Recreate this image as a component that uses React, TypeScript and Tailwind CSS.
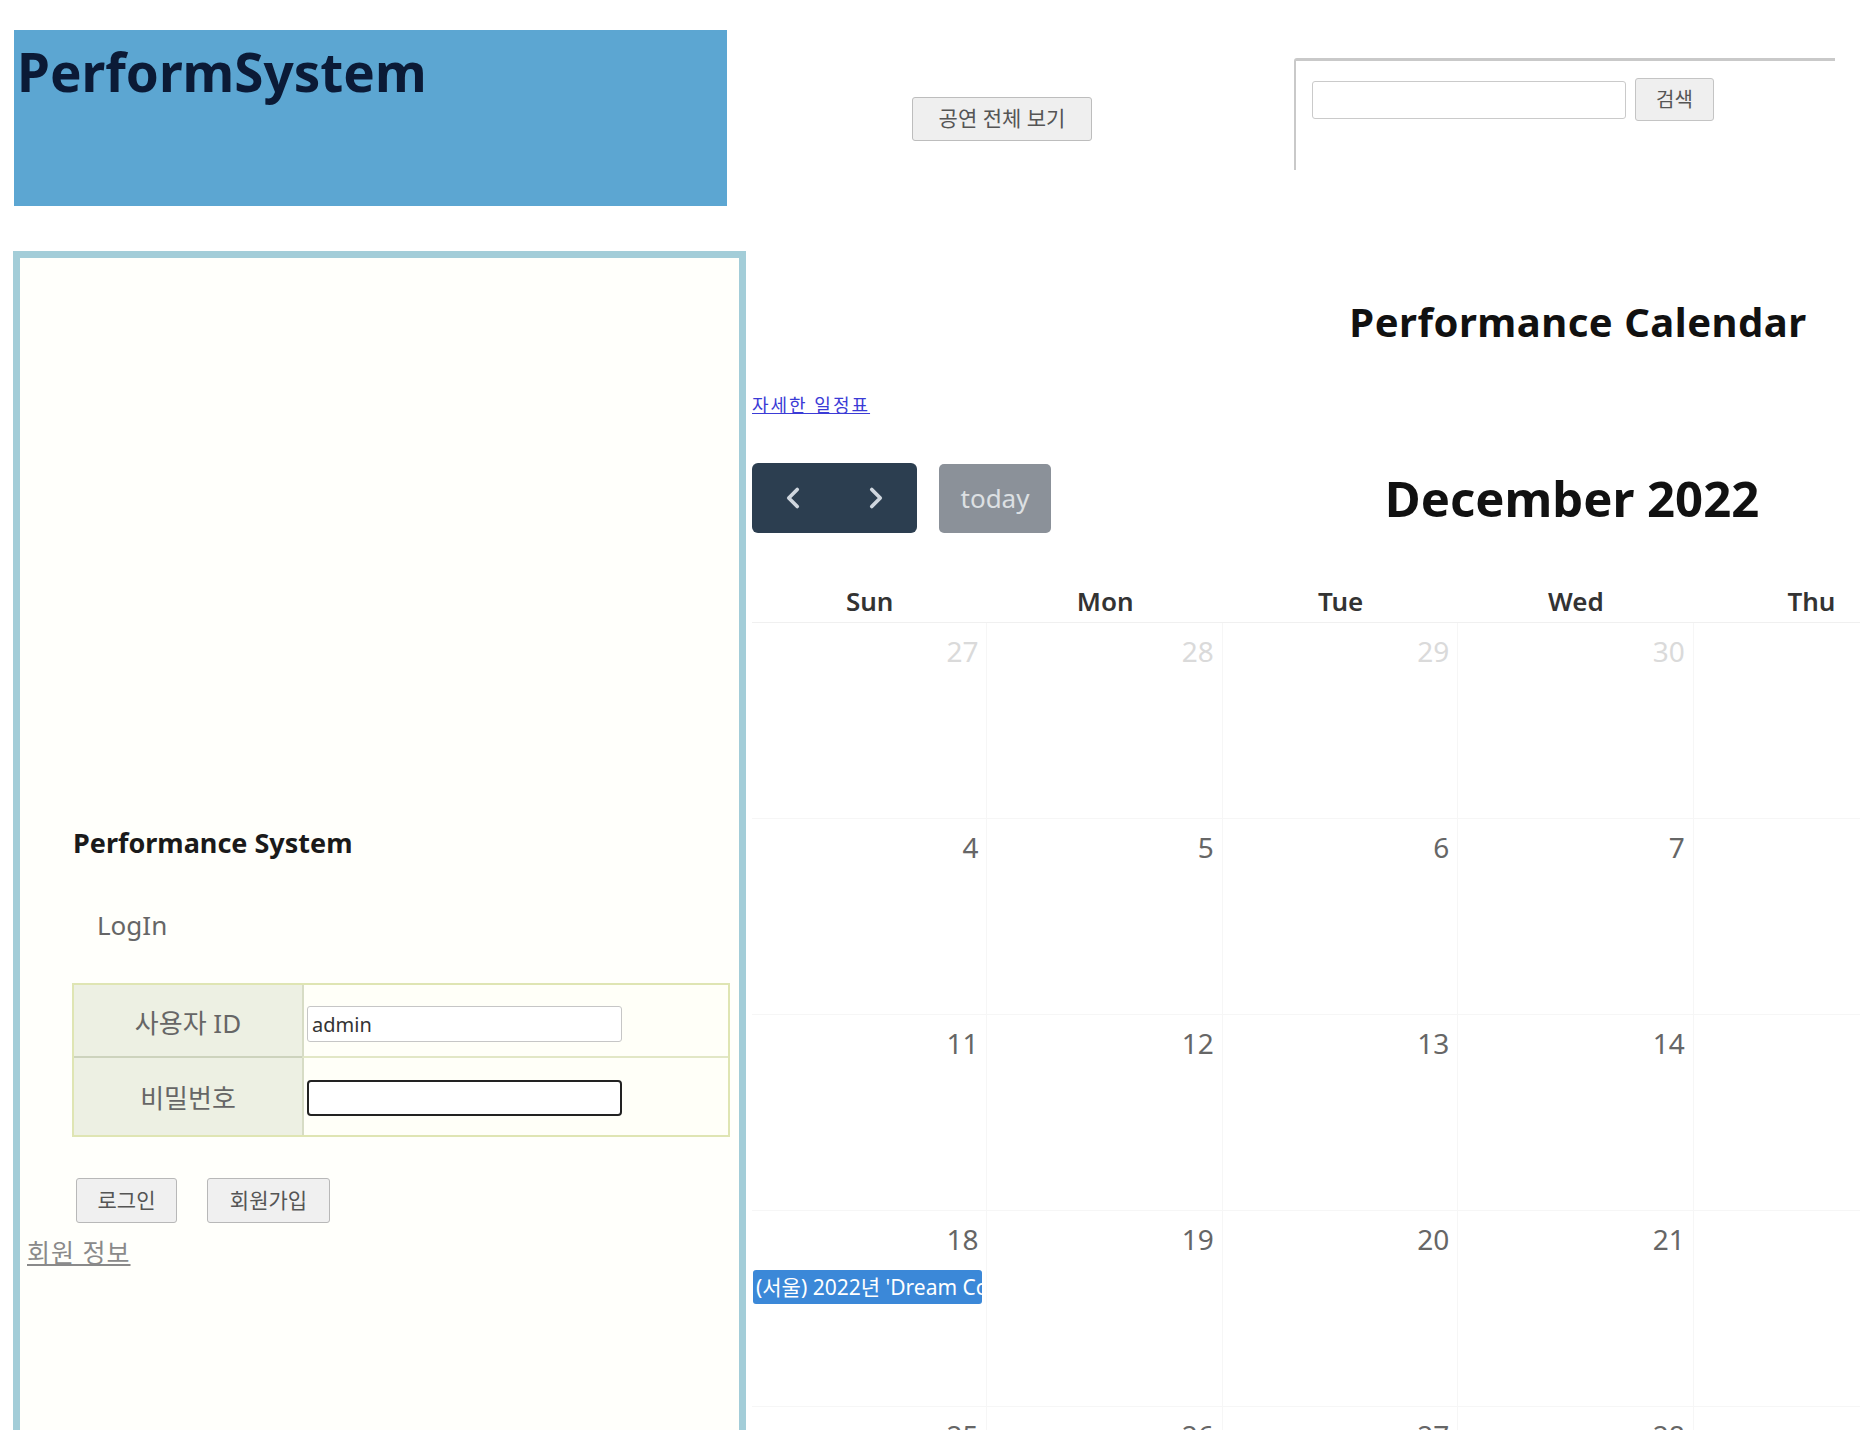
import React from "react";
import { ChevronLeft, ChevronRight } from "lucide-react";

type Day = { n: number; other?: boolean; events?: string[] };

const weeks: Day[][] = [
  [
    { n: 27, other: true },
    { n: 28, other: true },
    { n: 29, other: true },
    { n: 30, other: true },
    { n: 1 },
    { n: 2 },
    { n: 3 },
  ],
  [4, 5, 6, 7, 8, 9, 10].map((n) => ({ n })),
  [11, 12, 13, 14, 15, 16, 17].map((n) => ({ n })),
  [
    { n: 18, events: ["(서울) 2022년 'Dream Concert'"] },
    { n: 19 },
    { n: 20 },
    { n: 21 },
    { n: 22 },
    { n: 23 },
    { n: 24 },
  ],
  [25, 26, 27, 28, 29, 30, 31].map((n) => ({ n })),
];

const dayNames = ["Sun", "Mon", "Tue", "Wed", "Thu", "Fri", "Sat"];

const LoginPanel: React.FC = () => {
  return (
    <aside className="ml-[13px] w-[733px] h-[1200px] shrink-0 border-[7px] border-[#a3cdd8] bg-[#fffffb] pt-[567px]">
      <h2 className="ml-[53px] text-[27px] font-bold leading-[36px] text-[#1a1a1a]">
        Performance System
      </h2>
      <p className="ml-[77px] mt-[46px] text-[26px] leading-[36px] text-[#666]">
        LogIn
      </p>

      {/* 로그인 폼 */}
      <div className="ml-[52px] mt-[40px] w-[658px] border-2 border-[#dfe5b3] grid grid-cols-[228px_1fr]">
        <div className="h-[73px] pt-[6px] bg-[#edf0e3] border-b-2 border-[#cdd3bd] flex items-center justify-center text-[26px] text-[#666]">
          사용자 ID
        </div>
        <div className="h-[73px] bg-[#fffff8] border-l-2 border-b-2 border-l-[#d7dcc5] border-b-[#e2e7c6] pl-[3px] pt-[21px]">
          <input
            defaultValue="admin"
            className="w-[315px] h-[36px] border-[1.5px] border-[#c6c6c6] rounded-[3px] bg-white px-[4px] text-[20px] text-[#333] outline-none"
          />
        </div>
        <div className="h-[77px] pt-[4px] bg-[#edf0e3] flex items-center justify-center text-[26px] text-[#666]">
          비밀번호
        </div>
        <div className="h-[77px] bg-[#fffff8] border-l-2 border-[#d7dcc5] pl-[3px] pt-[22px]">
          <input
            type="password"
            className="w-[315px] h-[36px] border-2 border-[#222] rounded-[4px] bg-white px-[4px] text-[20px] outline-none"
          />
        </div>
      </div>

      <div className="ml-[56px] mt-[41px] flex items-center gap-[30px]">
        <button className="w-[101px] h-[45px] bg-[#f0f0f0] border-[1.5px] border-[#b8b8b8] rounded-[3px] text-[21px] text-[#555]">
          로그인
        </button>
        <button className="w-[123px] h-[45px] bg-[#f0f0f0] border-[1.5px] border-[#b8b8b8] rounded-[3px] text-[21px] text-[#555]">
          회원가입
        </button>
      </div>
      <a className="ml-[7px] mt-[13px] block w-fit text-[25px] leading-[32px] tracking-[1px] text-[#8a8a8a] underline">
        회원 정보
      </a>
    </aside>
  );
};

const Calendar: React.FC = () => {
  return (
    <section className="ml-[6px] w-[1648px] shrink-0">
      <h2 className="mt-[45px] pl-[4px] text-center text-[40px] font-bold leading-[52px] tracking-[0.5px] text-[#111]">
        Performance Calendar
      </h2>
      <a className="mt-[46px] block w-fit text-[18px] leading-[22px] tracking-[2px] text-[#3b3bd6] underline">
        자세한 일정표
      </a>

      {/* Toolbar */}
      <div className="mt-[47px] h-[70px] grid grid-cols-[1fr_auto_1fr] items-center">
        <div className="flex items-center">
          <div className="flex h-[70px] rounded-[6px] overflow-hidden bg-[#2c3e50]">
            <button className="w-[82px] h-full flex items-center justify-center text-[#cfd6de]">
              <ChevronLeft size={34} strokeWidth={2.6} />
            </button>
            <button className="w-[83px] h-full flex items-center justify-center text-[#cfd6de]">
              <ChevronRight size={34} strokeWidth={2.6} />
            </button>
          </div>
          <button className="ml-[22px] w-[112px] h-[69px] rounded-[5px] bg-[#8b9199] text-[26px] text-[#dde0e3]">
            today
          </button>
        </div>
        <h2 className="pr-[8px] text-[49px] font-bold leading-[60px] text-[#111]">
          December 2022
        </h2>
        <div />
      </div>

      {/* Day names */}
      <div className="mt-[47px] grid grid-cols-7 border-b border-[#f0f0f0]">
        {dayNames.map((d) => (
          <div
            key={d}
            className="h-[42px] text-center text-[26px] font-semibold leading-[42px] text-[#333]"
          >
            {d}
          </div>
        ))}
      </div>

      {/* Weeks */}
      {weeks.map((week, wi) => (
        <div key={wi} className="grid grid-cols-7 h-[196px]">
          {week.map((day, di) => (
            <div
              key={di}
              className="border-r border-b border-[#f6f6f6] flex flex-col"
            >
              <div
                className={
                  day.other
                    ? "pt-[14px] pr-[8px] text-right text-[28px] leading-[28px] text-[#dadada]"
                    : "pt-[14px] pr-[8px] text-right text-[28px] leading-[28px] text-[#666]"
                }
              >
                {day.n}
              </div>
              {day.events?.map((ev) => (
                <div
                  key={ev}
                  className="ml-[1px] mr-[4px] mt-[17px] h-[34px] rounded-[3px] bg-[#3b88d8] pl-[3px] text-[21px] leading-[34px] text-white whitespace-nowrap overflow-hidden"
                >
                  {ev}
                </div>
              ))}
            </div>
          ))}
        </div>
      ))}
    </section>
  );
};

const App: React.FC = () => {
  return (
    <div className="w-[1860px] h-[1430px] overflow-hidden bg-white font-['Noto_Sans','Noto_Sans_CJK_KR',sans-serif]">
      {/* Top bar */}
      <div className="flex items-start pt-[30px]">
        <header className="ml-[14px] w-[713px] h-[176px] shrink-0 bg-[#5ca6d2] pl-[3px] pt-[9px]">
          <h1 className="text-[53px] font-bold leading-[66px] text-[#0b1a36]">
            PerformSystem
          </h1>
        </header>
        <button className="ml-[185px] mt-[67px] w-[180px] h-[44px] shrink-0 bg-[#efefef] border-[1.5px] border-[#bdbdbd] rounded-[3px] text-[21px] text-[#555]">
          공연 전체 보기
        </button>
        <div className="ml-[202px] mt-[28px] w-[541px] h-[112px] shrink-0 border-t-[3px] border-l-2 border-[#c9c9c9] rounded-tl-[3px] flex items-start pl-[16px] pt-[20px]">
          <input className="w-[314px] h-[38px] border-[1.5px] border-[#cacaca] rounded-[3px] bg-white outline-none" />
          <button className="ml-[9px] -mt-[3px] w-[79px] h-[43px] bg-[#efefef] border-[1.5px] border-[#c4c4c4] rounded-[3px] text-[20px] text-[#555]">
            검색
          </button>
        </div>
      </div>

      {/* Main */}
      <div className="flex items-start mt-[45px]">
        <LoginPanel />
        <Calendar />
      </div>
    </div>
  );
};

export default App;
